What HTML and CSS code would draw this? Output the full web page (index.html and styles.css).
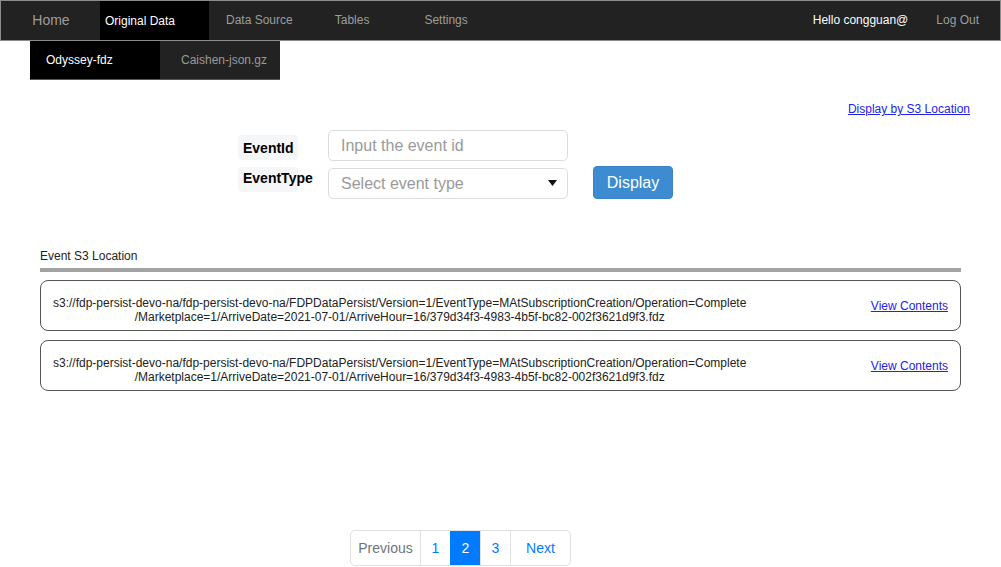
FILE: index.html
```html
<!DOCTYPE html>
<html>
<head>
<meta charset="utf-8">
<link rel="stylesheet" href="styles.css">
</head>
<body>
<nav class="navbar">
  <ul class="nav-left">
    <li class="nav-home">Home</li>
    <li class="nav-active">Original Data</li>
    <li class="nav-item nav-ds">Data Source</li>
    <li class="nav-item nav-tables">Tables</li>
    <li class="nav-item nav-settings">Settings</li>
  </ul>
  <div class="nav-right">
    <span class="nav-hello">Hello congguan@</span>
    <span class="nav-logout">Log Out</span>
  </div>
</nav>
<div class="subnav">
  <div class="sub-tab sub-active">Odyssey-fdz</div>
  <div class="sub-tab sub-idle">Caishen-json.gz</div>
</div>

<div class="top-link-row">
  <a href="#" class="link">Display by S3 Location</a>
</div>

<form class="query-form">
  <div class="label label-1">EventId</div>
  <input class="field" type="text" placeholder="Input the event id">
  <div></div>
  <div class="label label-2">EventType</div>
  <div class="select-wrap">
    <select class="field select">
      <option>Select event type</option>
    </select>
    <svg class="caret" width="9" height="6" viewBox="0 0 9 6"><path d="M0 0H9L4.5 6Z" fill="#111"/></svg>
  </div>
  <button type="button" class="btn">Display</button>
</form>

<section class="results">
  <div class="results-title">Event S3 Location</div>
  <div class="rule"></div>
  <div class="card">
    <div class="card-text">s3://fdp-persist-devo-na/fdp-persist-devo-na/FDPDataPersist/Version=1/EventType=MAtSubscriptionCreation/Operation=Complete<br>/Marketplace=1/ArriveDate=2021-07-01/ArriveHour=16/379d34f3-4983-4b5f-bc82-002f3621d9f3.fdz</div>
    <a href="#" class="link">View Contents</a>
  </div>
  <div class="card">
    <div class="card-text">s3://fdp-persist-devo-na/fdp-persist-devo-na/FDPDataPersist/Version=1/EventType=MAtSubscriptionCreation/Operation=Complete<br>/Marketplace=1/ArriveDate=2021-07-01/ArriveHour=16/379d34f3-4983-4b5f-bc82-002f3621d9f3.fdz</div>
    <a href="#" class="link">View Contents</a>
  </div>
</section>

<div class="pagination">
  <span class="page page-prev">Previous</span>
  <span class="page page-num">1</span>
  <span class="page page-num page-active">2</span>
  <span class="page page-num">3</span>
  <span class="page page-next">Next</span>
</div>
</body>
</html>
```

FILE: styles.css
```css
* { box-sizing: border-box; }
html, body { margin: 0; padding: 0; }
body {
  font-family: "Liberation Sans", Arial, Helvetica, sans-serif;
  background: #fff;
  color: #222;
  width: 1001px;
  height: 567px;
  overflow: hidden;
}

.navbar {
  display: flex;
  justify-content: space-between;
  align-items: stretch;
  height: 41px;
  background: #222;
  border: 1px solid #8c8c8c;
  font-size: 12px;
  line-height: 14px;
}
.nav-left {
  display: flex;
  list-style: none;
  margin: 0;
  padding: 0 0 1px 0;
  align-items: stretch;
}
.nav-left li {
  display: flex;
  align-items: center;
  color: #9d9d9d;
}
.nav-home {
  width: 99px;
  justify-content: center;
  font-size: 14px;
  padding-left: 1px;
}
.nav-active {
  width: 109px;
  padding-left: 5px;
  background: #000;
  color: #fff !important;
  margin-bottom: -1px;
}
.nav-ds { padding-left: 17px; }
.nav-tables { padding-left: 42px; }
.nav-settings { padding-left: 55px; }

.nav-right {
  display: flex;
  align-items: center;
  padding-right: 21px;
  padding-bottom: 1px;
}
.nav-hello { color: #fff; }
.nav-logout { color: #9d9d9d; margin-left: 28px; }

.subnav {
  display: flex;
  margin-left: 30px;
  height: 39px;
  font-size: 12px;
}
.sub-tab {
  display: flex;
  align-items: center;
  border-bottom: 1px solid #555;
}
.sub-active {
  width: 130px;
  padding-left: 16px;
  background: #000;
  color: #fff;
}
.sub-idle {
  width: 120px;
  padding-left: 21px;
  background: #222;
  color: #9a9a9a;
}

.link {
  color: #2222ee;
  text-decoration: underline;
  font-size: 12px;
}

.top-link-row {
  display: flex;
  justify-content: flex-end;
  padding-right: 31px;
  margin-top: 22px;
  line-height: 14px;
}

.query-form {
  display: grid;
  grid-template-columns: 60px 240px 80px;
  grid-template-rows: 31px 33px;
  column-gap: 30px;
  row-gap: 5px;
  margin: 14px 0 0 238px;
  width: 460px;
}
.query-form .btn { margin-left: -5px; }
.label {
  background: #f5f6f8;
  border-radius: 4px;
  height: 25px;
  width: 60px;
  padding-left: 5px;
  font-size: 14px;
  font-weight: bold;
  color: #000;
  white-space: nowrap;
  line-height: 25px;
}
.label-1 { align-self: start; margin-top: 5px; line-height: 26px; }
.label-2 { align-self: start; margin-top: 1px; line-height: 23px; }

.field {
  font-family: "Liberation Sans", Arial, Helvetica, sans-serif;
  width: 240px;
  border: 1px solid #dcdcdc;
  border-radius: 5px;
  font-size: 16px;
  padding: 0 12px;
  background: #fff;
  outline: none;
}
input.field { height: 31px; }
input.field::placeholder { color: #9a9a9a; }
.select-wrap {
  position: relative;
  align-self: center;
  height: 31px;
  margin-top: 1px;
}
.select {
  height: 31px;
  appearance: none;
  -webkit-appearance: none;
  color: #9a9a9a;
}
.caret {
  position: absolute;
  right: 11px;
  top: 12px;
}
.btn {
  width: 80px;
  height: 33px;
  background: #3d8bd0;
  color: #fff;
  border: 1px solid #3a84c6;
  border-radius: 4px;
  font-family: "Liberation Sans", Arial, Helvetica, sans-serif;
  font-size: 16px;
  padding: 0;
}

.results {
  margin: 50px 40px 0 40px;
}
.results-title {
  font-size: 12px;
  line-height: 14px;
  color: #222;
}
.rule {
  height: 4px;
  background: #a3a3a3;
  margin-top: 5px;
  margin-bottom: 8px;
}
.card {
  display: flex;
  justify-content: space-between;
  align-items: center;
  height: 51px;
  border: 1px solid #555;
  border-radius: 8px;
  padding: 0 12px 0 12px;
  margin-bottom: 9px;
}
.card-text {
  font-size: 12px;
  line-height: 14px;
  text-align: center;
  color: #222;
  padding-top: 8px;
  white-space: nowrap;
}

.pagination {
  display: flex;
  width: 221px;
  height: 36px;
  margin: 139px 0 0 350px;
  border: 1px solid #dee2e6;
  border-radius: 5px;
  overflow: hidden;
  font-size: 14px;
  line-height: 16px;
}
.page {
  display: flex;
  align-items: center;
  justify-content: center;
  color: #007bff;
  border-left: 1px solid #dee2e6;
  padding-bottom: 1px;
}
.page-prev { width: 69px; color: #6c757d; border-left: none; }
.page-num { width: 30px; }
.page-next { flex: 1; }
.page-active { background: #007bff; color: #fff; border-left-color: #007bff; }
```
